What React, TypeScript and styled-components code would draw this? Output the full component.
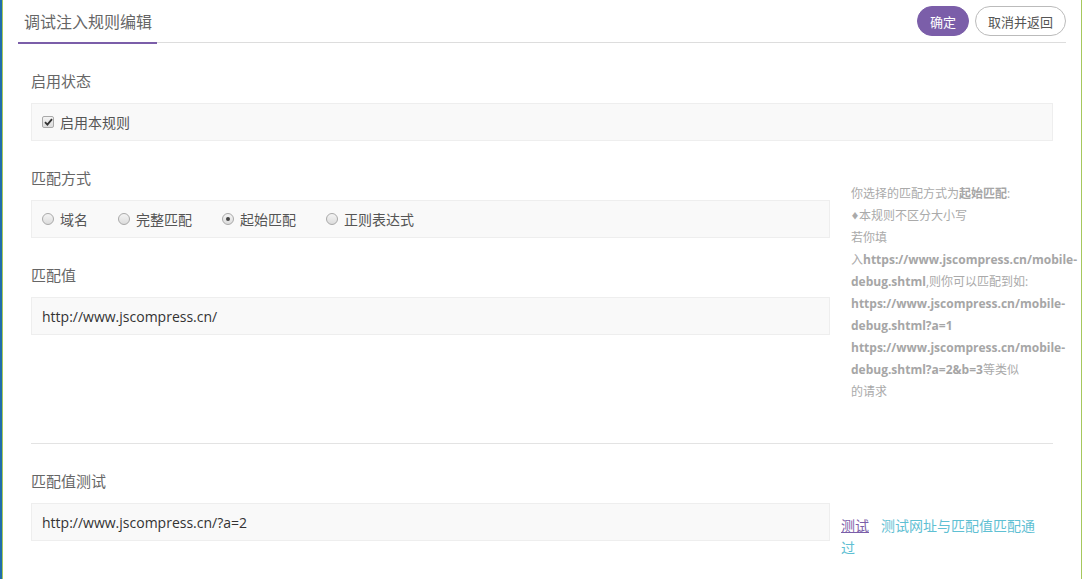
import React from "react";
import styled, { createGlobalStyle } from "styled-components";

const GlobalStyle = createGlobalStyle`
  html, body {
    margin: 0;
    padding: 0;
    height: 100%;
    background: #1f6dab;
  }
  body {
    font-family: "Open Sans", "Noto Sans CJK SC", sans-serif;
    overflow: hidden;
  }
`;

const Window = styled.div`
  margin-left: 2px;
  height: 579px;
  box-sizing: border-box;
  background: #fff;
  border-left: 1px solid #a6c85c;
  border-right: 1px solid #a6c85c;
  overflow: hidden;
`;

const Header = styled.div`
  display: flex;
  align-items: center;
  height: 42px;
  margin: 0 15px 0 15px;
  border-bottom: 1px solid #dddddd;
`;

const Tab = styled.div`
  align-self: stretch;
  display: flex;
  align-items: center;
  padding: 0 5px 0 6px;
  margin-bottom: -2px;
  border-bottom: 2px solid #7b5ea9;
  font-size: 16px;
  color: #666;
`;

const Actions = styled.div`
  margin-left: auto;
  display: flex;
  gap: 6px;
`;

const Button = styled.button<{ $primary?: boolean }>`
  height: 30px;
  padding: 0 12px;
  border-radius: 15px;
  font-family: inherit;
  font-size: 13px;
  cursor: pointer;
  border: 1px solid ${(p) => (p.$primary ? "#7b5ea9" : "#bbbbbb")};
  background: ${(p) => (p.$primary ? "#7b5ea9" : "#fff")};
  color: ${(p) => (p.$primary ? "#fff" : "#555")};
`;

const Content = styled.div`
  padding: 27px 28px 0 28px;
`;

const Group = styled.div`
  margin-bottom: 26px;
`;

const Label = styled.div`
  height: 22px;
  line-height: 22px;
  font-size: 15px;
  color: #666;
  margin-bottom: 11px;
`;

const Well = styled.div<{ $width?: number }>`
  box-sizing: border-box;
  height: 38px;
  width: ${(p) => (p.$width ? `${p.$width}px` : "auto")};
  display: flex;
  align-items: center;
  gap: 30px;
  padding: 0 10px;
  background: #f9f9f9;
  border: 1px solid #eeeeee;
  font-size: 14px;
  color: #555;
`;

const Option = styled.label`
  display: flex;
  align-items: center;
  gap: 6px;
  cursor: pointer;
`;

const Box = styled.span<{ $round?: boolean }>`
  box-sizing: border-box;
  width: 12px;
  height: 12px;
  border: 1px solid #a9a9a9;
  border-radius: ${(p) => (p.$round ? "50%" : "2px")};
  background: linear-gradient(#f4f4f4, #dcdcdc);
  display: flex;
  align-items: center;
  justify-content: center;
`;

const Dot = styled.span`
  width: 4px;
  height: 4px;
  border-radius: 50%;
  background: #444;
`;

const ValueText = styled.span`
  font-size: 14px;
  color: #333;
`;

const Row = styled.div`
  display: flex;
  align-items: flex-start;
  gap: 11px;
`;

const LeftCol = styled.div`
  width: 799px;
  flex: none;
`;

const Help = styled.div`
  padding: 16px 0 0 10px;
  font-size: 12px;
  line-height: 22px;
  color: #aaa;
  white-space: nowrap;
  b {
    color: #a6a6a6;
    font-weight: 700;
  }
`;

const Bullet = styled.span`
  font-size: 8px;
  vertical-align: 1px;
`;

const Divider = styled.hr`
  border: none;
  border-top: 1px solid #e3e3e3;
  margin: 40px 0 26px 0;
`;

const TestResult = styled.div`
  width: 200px;
  padding-top: 12px;
  font-size: 14px;
  line-height: 22px;
`;

const TestLink = styled.a`
  color: #7b5ea9;
  text-decoration: underline;
  margin-right: 12px;
  cursor: pointer;
`;

const Pass = styled.span`
  color: #5fc0d3;
`;

function Check() {
  return (
    <Box>
      <svg width="9" height="8" viewBox="0 0 9 8">
        <path d="M1 4.2 L3.4 6.6 L8 1.2" fill="none" stroke="#333" strokeWidth="1.8" />
      </svg>
    </Box>
  );
}

function Radio(props: { checked?: boolean }) {
  return <Box $round>{props.checked && <Dot />}</Box>;
}

const modes = ["域名", "完整匹配", "起始匹配", "正则表达式"];

export default function App() {
  return (
    <Window>
      <GlobalStyle />
      <Header>
        <Tab>调试注入规则编辑</Tab>
        <Actions>
          <Button $primary>确定</Button>
          <Button>取消并返回</Button>
        </Actions>
      </Header>
      <Content>
        <Group>
          <Label>启用状态</Label>
          <Well>
            <Option>
              <Check />
              启用本规则
            </Option>
          </Well>
        </Group>
        <Row>
          <LeftCol>
            <Group>
              <Label>匹配方式</Label>
              <Well>
                {modes.map((m) => (
                  <Option key={m}>
                    <Radio checked={m === "起始匹配"} />
                    {m}
                  </Option>
                ))}
              </Well>
            </Group>
            <Group>
              <Label>匹配值</Label>
              <Well>
                <ValueText>http://www.jscompress.cn/</ValueText>
              </Well>
            </Group>
          </LeftCol>
          <Help>
            你选择的匹配方式为<b>起始匹配</b>:
            <br />
            <Bullet>♦</Bullet>本规则不区分大小写
            <br />
            若你填
            <br />
            入<b>https://www.jscompress.cn/mobile-</b>
            <br />
            <b>debug.shtml</b>,则你可以匹配到如:
            <br />
            <b>https://www.jscompress.cn/mobile-</b>
            <br />
            <b>debug.shtml?a=1</b>
            <br />
            <b>https://www.jscompress.cn/mobile-</b>
            <br />
            <b>debug.shtml?a=2&amp;b=3</b>等类似
            <br />
            的请求
          </Help>
        </Row>
        <Divider />
        <Label>匹配值测试</Label>
        <Row>
          <Well $width={799}>
            <ValueText>http://www.jscompress.cn/?a=2</ValueText>
          </Well>
          <TestResult>
            <TestLink>测试</TestLink>
            <Pass>测试网址与匹配值匹配通过</Pass>
          </TestResult>
        </Row>
      </Content>
    </Window>
  );
}
